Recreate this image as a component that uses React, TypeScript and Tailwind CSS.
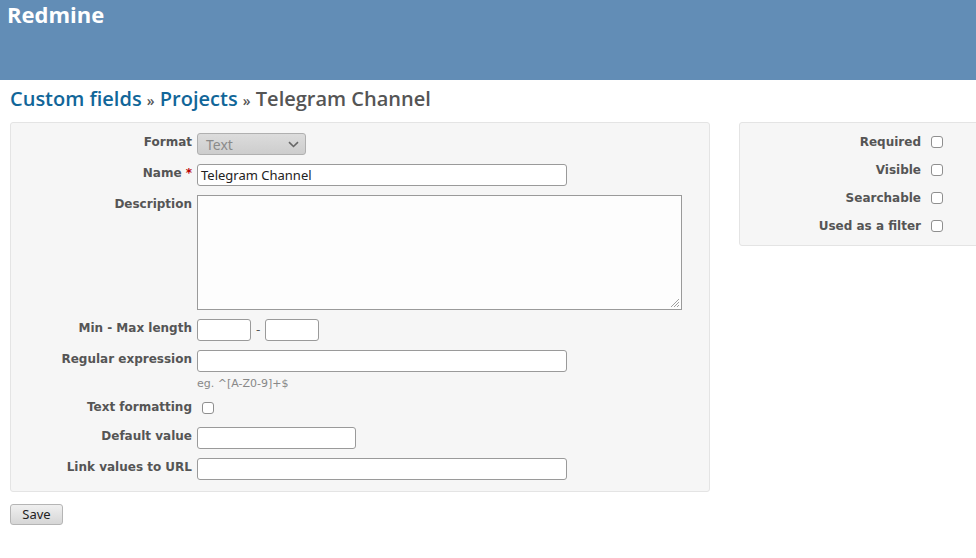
import React from "react";

const labelFont = { fontFamily: '"DejaVu Sans", Verdana, sans-serif' } as const;
const inputFont = { fontFamily: '"Noto Sans", "Open Sans", sans-serif' } as const;
const titleFont = { fontFamily: '"Open Sans", "DejaVu Sans", sans-serif' } as const;

function Label({ children }: { children: React.ReactNode }) {
  return (
    <div className="w-[181px] shrink-0 text-right text-[12px] font-bold leading-[16px] text-[#555] pt-[1px]" style={labelFont}>
      {children}
    </div>
  );
}

function TextInput({ w, value }: { w: string; value?: string }) {
  return (
    <div
      className={`${w} h-[22px] rounded-[3px] border border-[#9a9a9a] bg-white px-[3px] text-[13px] leading-[20px] text-[#222]`}
      style={inputFont}
    >
      {value}
    </div>
  );
}

function Check() {
  return <span className="block h-[12px] w-[12px] rounded-[3px] border border-[#8f8f8f] bg-white" />;
}

export default function App() {
  return (
    <div className="w-[976px] h-[558px] overflow-hidden bg-white" style={labelFont}>
      <div className="h-[80px] bg-[#628db6] px-[7px]">
        <div className="text-[22px] font-bold leading-[28px] text-white" style={titleFont}>
          Redmine
        </div>
      </div>

      <div className="px-[10px]">
        <h2
          className="mt-[8px] mb-[12px] h-[22px] text-[20px] font-semibold leading-[22px] text-[#555] whitespace-nowrap"
          style={titleFont}
        >
          <span className="text-[#169]">Custom fields</span> <span className="text-[14px]">»</span>{" "}
          <span className="text-[#169]">Projects</span> <span className="text-[14px]">»</span> Telegram Channel
        </h2>

        <div className="flex items-start gap-[29px]">
          <div className="w-[700px] shrink-0 rounded-[3px] border border-[#e4e4e4] bg-[#f6f6f6] pt-[10px] pb-[11px]">
            <div className="flex items-start gap-[5px] mb-[9px]">
              <Label>Format</Label>
              <div
                className="flex h-[22px] w-[109px] items-center justify-between rounded-[3px] border border-[#b0b0b0] bg-gradient-to-b from-[#dcdcdc] to-[#cdcdcd] pl-[8px] pr-[6px] text-[14px] text-[#8a8a8a]"
                style={inputFont}
              >
                <span>Text</span>
                <svg width="11" height="7" viewBox="0 0 11 7">
                  <path d="M1 1.2 L5.5 5.5 L10 1.2" fill="none" stroke="#666" strokeWidth="1.6" />
                </svg>
              </div>
            </div>

            <div className="flex items-start gap-[5px] mb-[9px]">
              <Label>
                Name <span className="text-[#bb0000]">*</span>
              </Label>
              <TextInput w="w-[370px]" value="Telegram Channel" />
            </div>

            <div className="flex items-start gap-[5px] mb-[9px]">
              <Label>Description</Label>
              <div className="relative h-[115px] w-[485px] border border-[#9a9a9a] bg-[#fdfdfd]">
                <svg className="absolute right-[1px] bottom-[1px]" width="12" height="12" viewBox="0 0 12 12">
                  <path d="M11 3 L3 11 M11 6 L6 11 M11 9 L9 11" stroke="#a0a0a0" strokeWidth="1" />
                </svg>
              </div>
            </div>

            <div className="flex items-start gap-[5px] mb-[9px]">
              <Label>Min - Max length</Label>
              <div className="flex items-center">
                <TextInput w="w-[54px]" />
                <span className="mx-[5px] text-[12px] text-[#555]">-</span>
                <TextInput w="w-[54px]" />
              </div>
            </div>

            <div className="flex items-start gap-[5px]">
              <Label>Regular expression</Label>
              <div>
                <TextInput w="w-[370px]" />
                <div className="mt-[5px] text-[11px] leading-[14px] text-[#888]">eg. ^[A-Z0-9]+$</div>
              </div>
            </div>

            <div className="flex items-start gap-[5px] mt-[7px] mb-[11px] h-[18px]">
              <Label>Text formatting</Label>
              <div className="pl-[5px] pt-[4px]">
                <Check />
              </div>
            </div>

            <div className="flex items-start gap-[5px] mb-[9px]">
              <Label>Default value</Label>
              <TextInput w="w-[159px]" />
            </div>

            <div className="flex items-start gap-[5px]">
              <Label>Link values to URL</Label>
              <TextInput w="w-[370px]" />
            </div>
          </div>

          <div className="w-[300px] shrink-0 rounded-[3px] border border-[#e4e4e4] bg-[#f6f6f6] pt-[10px] pb-[10px]">
            {["Required", "Visible", "Searchable", "Used as a filter"].map((t, i) => (
              <div key={t} className={`flex items-start gap-[5px] h-[18px] ${i < 3 ? "mb-[10px]" : ""}`}>
                <Label>{t}</Label>
                <div className="pl-[5px] pt-[3px]">
                  <Check />
                </div>
              </div>
            ))}
          </div>
        </div>

        <button
          className="mt-[12px] h-[21px] w-[53px] rounded-[3px] border border-[#b5b5b5] bg-gradient-to-b from-[#f0f0f0] to-[#d6d6d6] text-[13px] leading-[19px] text-[#222]"
          style={inputFont}
        >
          Save
        </button>
      </div>
    </div>
  );
}
